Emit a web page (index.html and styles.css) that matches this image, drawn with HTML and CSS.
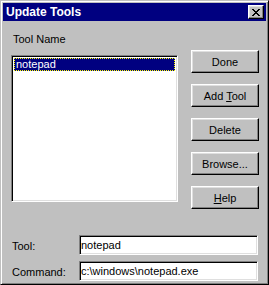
FILE: index.html
```html
<!DOCTYPE html>
<html lang="en">
<head>
  <meta charset="UTF-8">
  <title> Update Tools </title>
  <link rel="stylesheet" href="styles.css">
</head>
<body>
  <div class="window">
    <div class="titlebar">
      <span class="title">Update Tools</span>
      <button class="close">
        <svg width="8" height="7" viewBox="0 0 8 7">
          <path fill="#000" d="M0 0h2v1H0zM6 0h2v1H6zM1 1h2v1H1zM5 1h2v1H5zM2 2h4v1H2zM3 3h2v1H3zM2 4h4v1H2zM1 5h2v1H1zM5 5h2v1H5zM0 6h2v1H0zM6 6h2v1H6z"/>
        </svg>
      </button>
    </div>
    <div class="content">
      <div class="top">
        <div class="list-col">
          <p class="label">Tool Name</p>
          <ul class="list">
            <li class="item selected">notepad</li>
          </ul>
        </div>
        <div class="buttons">
          <button class="btn">Done</button>
          <button class="btn">Add <u>T</u>ool</button>
          <button class="btn">Delete</button>
          <button class="btn">Browse...</button>
          <button class="btn"><u>H</u>elp</button>
        </div>
      </div>
      <div class="form">
        <div class="row">
          <label class="row-label">Tool:</label>
          <input class="field" type="text" value="notepad">
        </div>
        <div class="row">
          <label class="row-label">Command:</label>
          <input class="field" type="text" value="c:\windows\notepad.exe">
        </div>
      </div>
    </div>
  </div>
</body>
</html>
```

FILE: styles.css
```css
* {
  margin: 0;
  padding: 0;
  box-sizing: border-box;
}

body {
  width: 269px;
  height: 285px;
  font-family: "Liberation Sans", Arial, sans-serif;
  font-size: 11px;
  color: #000;
  background-color: #c0c0c0;
}

ul {
  list-style: none;
}

.window {
  width: 269px;
  height: 285px;
  padding: 2px;
  background-color: #c0c0c0;
  border: 1px solid;
  border-color: #c0c0c0 #000 #000 #c0c0c0;
  box-shadow: inset 1px 1px #fff, inset -1px -1px #808080;
}

.titlebar {
  display: flex;
  align-items: center;
  justify-content: space-between;
  height: 18px;
  padding: 0 2px 0 3px;
  background-color: #000080;
}

.title {
  color: #fff;
  font-size: 12px;
  font-weight: 700;
  line-height: 14px;
}

.close {
  display: flex;
  align-items: center;
  justify-content: center;
  width: 16px;
  height: 14px;
  padding-top: 1px;
  background-color: #c0c0c0;
  border: 1px solid;
  border-color: #fff #000 #000 #fff;
  box-shadow: inset -1px -1px #808080, inset 1px 1px #dfdfdf;
}

.content {
  padding: 12px 7px 0 8px;
}

.top {
  display: flex;
  gap: 13px;
}

.list-col {
  width: 167px;
}

.label {
  margin: 0 0 9px 2px;
  line-height: 13px;
}

.list {
  height: 147px;
  padding: 2px;
  background-color: #fff;
  border: 1px solid;
  border-color: #808080 #fff #fff #808080;
  box-shadow: inset 1px 1px #000, inset -1px -1px #dfdfdf;
}

.item {
  height: 13px;
  padding-left: 1px;
  line-height: 11px;
  border: 1px solid transparent;
}

.item.selected {
  color: #fff;
  background-color: #000080;
  border: 1px dotted #ffff00;
}

.buttons {
  display: flex;
  flex-direction: column;
  gap: 11px;
  padding-top: 17px;
}

.btn {
  width: 68px;
  height: 23px;
  font-family: inherit;
  font-size: 11px;
  color: #000;
  background-color: #c0c0c0;
  border: 1px solid;
  border-color: #fff #000 #000 #fff;
  box-shadow: inset -1px -1px #808080, inset 1px 1px #dfdfdf;
}

.form {
  display: flex;
  flex-direction: column;
  gap: 6px;
  margin-top: 26px;
}

.row {
  display: flex;
  align-items: center;
}

.row-label {
  width: 67px;
  margin-left: 1px;
  padding-top: 2px;
}

.field {
  width: 179px;
  height: 20px;
  padding: 0 1px;
  font-family: inherit;
  font-size: 11px;
  color: #000;
  background-color: #fff;
  border: 1px solid;
  border-color: #808080 #fff #fff #808080;
  box-shadow: inset 1px 1px #000, inset -1px -1px #dfdfdf;
  outline: none;
}
```
